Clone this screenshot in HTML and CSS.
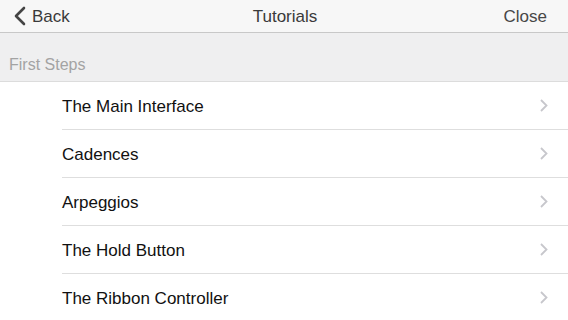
FILE: index.html
```html
<!DOCTYPE html>
<html lang="en">

<head>
    <meta charset="UTF-8">
    <meta name="viewport" content="width=device-width, initial-scale=1.0">
    <title>Tutorials</title>
    <link rel="stylesheet" href="styles.css">
</head>

<body>
    <div class="nav-bar">
        <div class="nav-back">
            <svg class="back-icon" width="13" height="20" viewBox="0 0 13 20">
                <path d="M11 2 L3 10 L11 18" fill="none" stroke="#444" stroke-width="2.6" stroke-linecap="round" stroke-linejoin="round"/>
            </svg>
            <span>Back</span>
        </div>
        <div class="nav-title">Tutorials</div>
        <div class="nav-close">Close</div>
    </div>

    <div class="section-header">First Steps</div>

    <ul class="list">
        <li class="list-row"><span>The Main Interface</span><svg class="chevron" width="8" height="13" viewBox="0 0 8 13"><path d="M1 1 L6.5 6.5 L1 12" fill="none" stroke="#c7c7cc" stroke-width="1.8"/></svg></li>
        <li class="list-row"><span>Cadences</span><svg class="chevron" width="8" height="13" viewBox="0 0 8 13"><path d="M1 1 L6.5 6.5 L1 12" fill="none" stroke="#c7c7cc" stroke-width="1.8"/></svg></li>
        <li class="list-row"><span>Arpeggios</span><svg class="chevron" width="8" height="13" viewBox="0 0 8 13"><path d="M1 1 L6.5 6.5 L1 12" fill="none" stroke="#c7c7cc" stroke-width="1.8"/></svg></li>
        <li class="list-row"><span>The Hold Button</span><svg class="chevron" width="8" height="13" viewBox="0 0 8 13"><path d="M1 1 L6.5 6.5 L1 12" fill="none" stroke="#c7c7cc" stroke-width="1.8"/></svg></li>
        <li class="list-row"><span>The Ribbon Controller</span><svg class="chevron" width="8" height="13" viewBox="0 0 8 13"><path d="M1 1 L6.5 6.5 L1 12" fill="none" stroke="#c7c7cc" stroke-width="1.8"/></svg></li>
    </ul>
</body>

</html>
```
FILE: styles.css
```css
body {
  margin: 0;
  font-family: "Liberation Sans", Arial, sans-serif;
  background-color: white;
  overflow: hidden;
}

.nav-bar {
  height: 32px;
  background-color: #f7f7f7;
  border-bottom: 1px solid #c8c8c8;
  display: flex;
  align-items: center;
  justify-content: space-between;
  padding: 1px 21px 0 13px;
  box-sizing: border-box;
  height: 33px;
  font-size: 17px;
  color: #3a3a3a;
}

.nav-back {
  display: flex;
  align-items: center;
  gap: 6px;
  width: 100px;
}

.back-icon {
  display: block;
  margin-top: -1px;
}

.nav-title {
  flex: 1;
  text-align: center;
  padding-right: 30px;
}

.nav-close {
  width: 60px;
  text-align: right;
  color: #474747;
}

.section-header {
  height: 49px;
  box-sizing: border-box;
  background-color: #efeff0;
  border-bottom: 1px solid #dcdcdc;
  padding: 23px 0 0 9px;
  font-size: 16px;
  color: #a3a3a3;
}

.list {
  list-style: none;
  margin: 0;
  padding: 0 0 0 62px;
}

.list-row {
  height: 48px;
  box-sizing: border-box;
  border-bottom: 1px solid #dedede;
  display: flex;
  align-items: center;
  justify-content: space-between;
  padding: 2px 20px 0 0;
  font-size: 17px;
  color: #111;
}

.chevron {
  display: block;
  margin-top: -2px;
}
```
